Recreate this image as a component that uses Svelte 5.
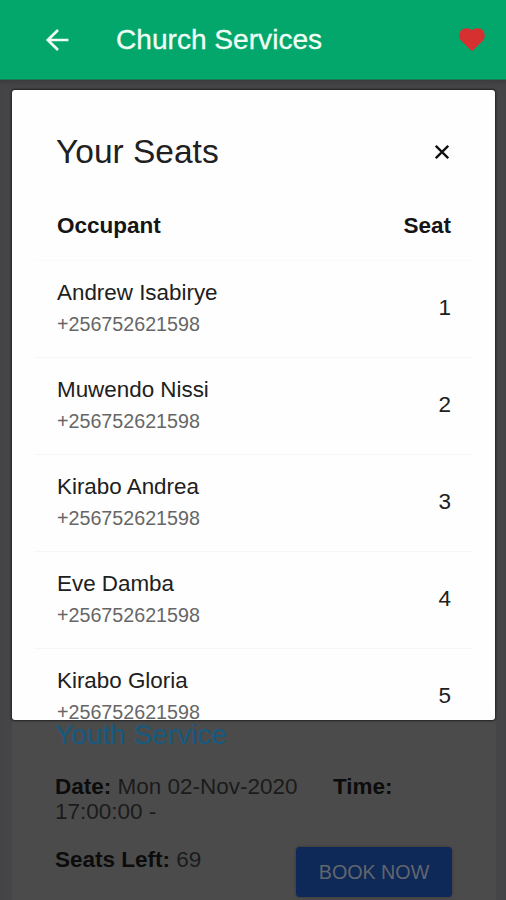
<script lang="ts">
  type Seat = { name: string; phone: string; seat: number };

  const seats: Seat[] = [
    { name: "Andrew Isabirye", phone: "+256752621598", seat: 1 },
    { name: "Muwendo Nissi", phone: "+256752621598", seat: 2 },
    { name: "Kirabo Andrea", phone: "+256752621598", seat: 3 },
    { name: "Eve Damba", phone: "+256752621598", seat: 4 },
    { name: "Kirabo Gloria", phone: "+256752621598", seat: 5 },
  ];

  let showSeats = $state(true);
</script>

<div class="screen">
  <header class="toolbar">
    <button class="icon-btn" aria-label="Back">
      <svg width="24" height="24" viewBox="0 0 24 24" fill="none" stroke="#effff5" stroke-width="2.7">
        <path d="M23.400 12H2.500M13 2L2.800 12l10.200 10" />
      </svg>
    </button>
    <h1>Church Services</h1>
    <svg class="heart" width="26" height="24" viewBox="0 0 26 24">
      <path
        fill="#d63031"
        d="M13 23.300L2.400 13C-.3 10.300-.2 5.800 1.600 3C3.800-.2 9.500-.2 11.600 1.200L13 2.600L14.400 1.200C16.500-.2 22.200-.2 24.400 3C26.200 5.800 26.300 10.300 23.600 13Z"
      />
    </svg>
  </header>

  <main>
    <section class="service">
      <h2>Youth Service</h2>
      <p class="when"><b>Date:</b> Mon 02-Nov-2020 <b class="time">Time:</b> 17:00:00 -</p>
      <div class="service-footer">
        <p><b>Seats Left:</b> 69</p>
        <button class="book" onclick={() => (showSeats = true)}>BOOK NOW</button>
      </div>
    </section>

    {#if showSeats}
      <div class="modal">
        <div class="modal-header">
          <h2>Your Seats</h2>
          <button class="icon-btn" aria-label="Close" onclick={() => (showSeats = false)}>
            <svg width="14" height="14" viewBox="0 0 14 14" fill="none" stroke="#111" stroke-width="2.3">
              <path d="M.8.8l12.400 12.400M13.200.8L.8 13.200" />
            </svg>
          </button>
        </div>
        <div class="list-head">
          <span>Occupant</span>
          <span>Seat</span>
        </div>
        {#each seats as s}
          <div class="row">
            <div>
              <div class="name">{s.name}</div>
              <div class="phone">{s.phone}</div>
            </div>
            <span class="seat">{s.seat}</span>
          </div>
        {/each}
      </div>
    {/if}
  </main>
</div>

<style>
  :global(body) {
    margin: 0;
  }

  .screen {
    display: flex;
    flex-direction: column;
    width: 506px;
    height: 900px;
    overflow: hidden;
    font-family: "Liberation Sans", Arial, sans-serif;
    background: #454446;
  }

  h1,
  h2,
  p {
    margin: 0;
    font-weight: 400;
  }

  button {
    border: none;
    font-family: inherit;
    cursor: pointer;
  }

  .icon-btn {
    display: flex;
    padding: 0;
    background: none;
  }

  .toolbar {
    display: flex;
    align-items: center;
    flex: none;
    box-sizing: border-box;
    height: 80px;
    padding: 0 22px 0 45px;
    background: #03a76c;
    border-bottom: 1px solid #187b56;
  }

  .toolbar h1 {
    flex: 1;
    margin-left: 46px;
    padding-left: 1px;
    font-size: 28.100px;
    line-height: 32px;
    color: #effff5;
    -webkit-text-stroke: 0.3px #effff5;
  }

  .heart {
    margin-right: -1px;
  }

  main {
    position: relative;
    flex: 1;
    display: flex;
    flex-direction: column;
    justify-content: flex-end;
    padding: 0 10px 0 12px;
    box-shadow: inset 0 5px 4px -3px #3a3a3a;
  }

  .service {
    box-sizing: border-box;
    height: 190px;
    padding: 8px 44px 0 43px;
    background: #4b4b4b;
    color: #1b1b1b;
    font-size: 22.500px;
    line-height: 25px;
  }

  .service h2 {
    font-size: 28px;
    line-height: 34px;
    color: #155a80;
  }

  .when {
    margin-top: 22px;
  }

  .service b {
    color: #0c0c0c;
  }

  .time {
    margin-left: 29px;
  }

  .service-footer {
    display: flex;
    justify-content: space-between;
    margin-top: 23px;
  }

  .book {
    width: 156px;
    height: 50px;
    border-radius: 4px;
    background: #0e2857;
    color: #62666d;
    font-size: 19.700px;
    box-shadow: 0 0 3px #353535;
  }

  .modal {
    position: absolute;
    top: 10px;
    left: 12px;
    width: 483px;
    height: 630px;
    box-sizing: border-box;
    overflow: hidden;
    padding: 0 22px;
    border-radius: 3px;
    background: #fefefe;
    box-shadow: 0 0 2px 1px #222;
    color: #202020;
  }

  .modal-header {
    display: flex;
    justify-content: space-between;
    align-items: center;
    height: 123px;
    padding: 0 24px 0 22px;
  }

  .modal-header h2 {
    font-size: 33.500px;
    line-height: 40px;
  }

  .list-head {
    display: flex;
    justify-content: space-between;
    height: 47px;
    padding: 0 22px 0 23px;
    font-size: 22.500px;
    line-height: 26px;
    font-weight: 700;
    color: #151515;
    border-bottom: 1px solid #fafafa;
  }

  .row {
    display: flex;
    justify-content: space-between;
    align-items: center;
    box-sizing: border-box;
    height: 97px;
    padding: 0 22px 2px 23px;
    border-bottom: 1px solid #f6f6f6;
  }

  .name {
    font-size: 22.400px;
    line-height: 33px;
  }

  .phone {
    font-size: 19.700px;
    line-height: 31px;
    color: #666;
  }

  .seat {
    font-size: 22.500px;
  }
</style>
